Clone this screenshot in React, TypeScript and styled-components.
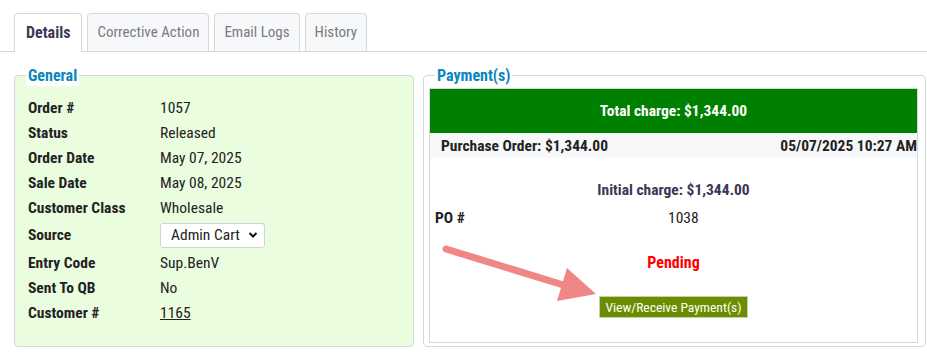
import styled, { createGlobalStyle } from 'styled-components';

const GlobalStyle = createGlobalStyle`
    body {
        margin: 0;
        background: #fff;
        font-family: 'Roboto Condensed', 'Liberation Sans Narrow', 'DejaVu Sans Condensed', Roboto, sans-serif;
        font-size: 15.5px;
        color: #222;
    }
`;

const Page = styled.div`
    position: relative;
    padding: 13px 1px 0 14px;
`;

const Tabs = styled.div`
    display: flex;
    gap: 5px;
    border-bottom: 1px solid #d5d9de;
    margin-right: -1px;
    margin-left: -14px;
    padding-left: 14px;
`;

const Tab = styled.div<{ $active?: boolean }>`
    padding: 0 ${(p) => (p.$active ? '11px' : '9px')} 2px;
    display: flex;
    align-items: center;
    font-size: ${(p) => (p.$active ? '16px' : '15px')};
    border: 1px solid #d5d9de;
    border-bottom: none;
    border-radius: 4px 4px 0 0;
    background: ${(p) => (p.$active ? '#fff' : '#f7f8fa')};
    color: ${(p) => (p.$active ? '#3d3656' : '#7a7a82')};
    font-weight: ${(p) => (p.$active ? 700 : 400)};
    margin-bottom: ${(p) => (p.$active ? '-1px' : '0')};
    height: ${(p) => (p.$active ? '39px' : '38px')};
    box-sizing: border-box;
`;

const Columns = styled.div`
    display: grid;
    grid-template-columns: 400px 1fr;
    gap: 9px;
    margin-top: 13px;
`;

const Box = styled.fieldset<{ $bg: string }>`
    margin: 0;
    padding: 0 6px 6px 5px;
    height: 282px;
    box-sizing: border-box;
    border: 1px solid #d5d9de;
    border-radius: 4px;
    background: ${(p) => p.$bg};
`;

const Legend = styled.legend`
    background: #fff;
    color: #0a86c0;
    font-weight: 700;
    font-size: 16px;
    padding: 0 2px;
    margin-left: 6px;
    line-height: 21px;
`;

const InfoList = styled.div`
    padding: 9px 0 0 8px;
`;

const InfoRow = styled.div<{ $tall?: boolean }>`
    display: grid;
    grid-template-columns: 132px 1fr;
    align-items: center;
    height: ${(p) => (p.$tall ? '30px' : '25px')};
`;

const Label = styled.div`
    font-weight: 700;
`;

const Value = styled.div``;

const LinkValue = styled.a`
    color: #222;
    text-decoration: underline;
`;

const Select = styled.div`
    width: 105px;
    height: 25px;
    box-sizing: border-box;
    border: 1px solid #cfd3d8;
    border-radius: 3px;
    background: #fff;
    display: flex;
    align-items: center;
    justify-content: space-between;
    padding: 0 6px 0 10px;
`;

const Inner = styled.div`
    border: 1px solid #d5d9de;
    height: 255px;
    box-sizing: border-box;
    margin-top: 2px;
    margin-right: 1px;
    text-align: center;
`;

const TotalBar = styled.div`
    background: #008000;
    color: #fff;
    font-weight: 700;
    height: 44px;
    display: flex;
    align-items: center;
    justify-content: center;
`;

const OrderLine = styled.div`
    background: #f7f8fa;
    height: 25px;
    display: flex;
    align-items: center;
    justify-content: space-between;
    padding: 0 0 0 11px;
    font-weight: 700;
`;

const Charge = styled.div`
    color: #3d3656;
    font-weight: 700;
    margin-top: 23px;
`;

const PoRow = styled.div`
    display: grid;
    grid-template-columns: 1fr 1fr;
    text-align: left;
    padding-left: 5px;
    margin-top: 10px;
`;

const PoNumber = styled.div`
    margin-left: -8px;
`;

const Pending = styled.div`
    color: #f00;
    font-weight: 700;
    font-size: 16px;
    margin-top: 26px;
`;

const PayButton = styled.button`
    margin-top: 24px;
    background: #6b8e00;
    color: #fff;
    border: 1px solid #c9d0b0;
    font-family: inherit;
    font-size: 13.5px;
    height: 22px;
    padding: 0 5px;
`;

const Arrow = styled.svg`
    position: absolute;
    left: 0;
    top: 0;
    pointer-events: none;
`;

const rows: [string, string][] = [
    ['Order #', '1057'],
    ['Status', 'Released'],
    ['Order Date', 'May 07, 2025'],
    ['Sale Date', 'May 08, 2025'],
    ['Customer Class', 'Wholesale']
];

const rowsAfter: [string, string][] = [
    ['Entry Code', 'Sup.BenV'],
    ['Sent To QB', 'No']
];

const App = () => (
    <Page>
        <GlobalStyle />
        <Tabs>
            <Tab $active>Details</Tab>
            <Tab>Corrective Action</Tab>
            <Tab>Email Logs</Tab>
            <Tab>History</Tab>
        </Tabs>

        <Columns>
            <Box $bg="#ebfddf">
                <Legend>General</Legend>
                <InfoList>
                    {rows.map(([k, v]) => (
                        <InfoRow key={k}>
                            <Label>{k}</Label>
                            <Value>{v}</Value>
                        </InfoRow>
                    ))}
                    <InfoRow $tall>
                        <Label>Source</Label>
                        <Select>
                            <span>Admin Cart</span>
                            <svg width="10" height="8" viewBox="0 0 10 8">
                                <path d="M1.5 2 L5 5.5 L8.5 2" fill="none" stroke="#111" strokeWidth="2" />
                            </svg>
                        </Select>
                    </InfoRow>
                    {rowsAfter.map(([k, v]) => (
                        <InfoRow key={k}>
                            <Label>{k}</Label>
                            <Value>{v}</Value>
                        </InfoRow>
                    ))}
                    <InfoRow>
                        <Label>Customer #</Label>
                        <LinkValue href="#">1165</LinkValue>
                    </InfoRow>
                </InfoList>
            </Box>

            <Box $bg="#fff">
                <Legend>Payment(s)</Legend>
                <Inner>
                    <TotalBar>Total charge: $1,344.00</TotalBar>
                    <OrderLine>
                        <span>Purchase Order: $1,344.00</span>
                        <span>05/07/2025 10:27 AM</span>
                    </OrderLine>
                    <Charge>Initial charge: $1,344.00</Charge>
                    <PoRow>
                        <Label>PO #</Label>
                        <PoNumber>1038</PoNumber>
                    </PoRow>
                    <Pending>Pending</Pending>
                    <PayButton>View/Receive Payment(s)</PayButton>
                </Inner>
            </Box>
        </Columns>

        <Arrow width="927" height="352">
            <line x1="446" y1="249" x2="570" y2="287" stroke="#f08686" strokeWidth="7" strokeLinecap="round" />
            <polygon points="567,268 596,294 557,301" fill="#f08686" />
        </Arrow>
    </Page>
);

export default App;
